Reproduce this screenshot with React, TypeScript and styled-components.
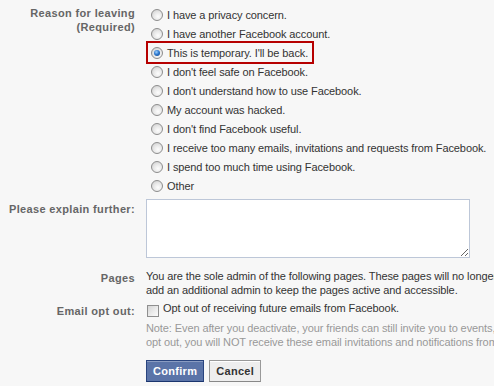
import React from "react";
import styled, { createGlobalStyle } from "styled-components";

const Global = createGlobalStyle`
  html, body { margin: 0; padding: 0; background: #f7f7f7; }
  body { overflow: hidden; width: 494px; height: 386px; }
`;

const Page = styled.div`
  font-family: "Liberation Sans", Arial, sans-serif;
  font-size: 11px;
  line-height: 14px;
  letter-spacing: -0.1px;
  color: #333;
  padding-top: 5px;
  width: 494px;
  overflow: hidden;
`;

const Row = styled.div<{ $mt?: number }>`
  display: flex;
  align-items: flex-start;
  margin-top: ${(p) => p.$mt ?? 0}px;
`;

const Label = styled.div<{ $pt?: number }>`
  flex: 0 0 135px;
  width: 135px;
  text-align: right;
  font-weight: bold;
  letter-spacing: 0.35px;
  color: #666;
  padding-top: ${(p) => p.$pt ?? 0}px;
  margin-right: 11px;
  box-sizing: border-box;
`;

const Content = styled.div`
  flex: 0 0 auto;
  white-space: nowrap;
`;

const Options = styled.div`
  display: flex;
  flex-direction: column;
`;

const Option = styled.div<{ $selected?: boolean }>`
  display: flex;
  align-items: center;
  height: 19px;
  box-sizing: border-box;
  padding-left: 5px;
  ${(p) =>
    p.$selected &&
    `
    height: 23px;
    margin: -2px 0;
    padding-left: 3px;
    padding-right: 4px;
    border: 2px solid #b60000;
    align-self: flex-start;
  `}
`;

const Radio = styled.span<{ $checked?: boolean }>`
  position: relative;
  width: 12px;
  height: 12px;
  box-sizing: border-box;
  border-radius: 50%;
  border: 1px solid #8d8d8d;
  background: radial-gradient(circle at 60% 65%, #fdfdfd 0%, #e9e9e9 45%, #c9c9c9 100%);
  margin-right: 4px;
  flex: 0 0 auto;
  ${(p) =>
    p.$checked &&
    `
    &::after {
      content: "";
      position: absolute;
      left: 2px;
      top: 2px;
      width: 6px;
      height: 6px;
      border-radius: 50%;
      background: radial-gradient(circle at 40% 35%, #9fd2ff 0%, #2f7ad0 45%, #0c3f80 100%);
    }
  `}
`;

const Textarea = styled.textarea`
  display: block;
  width: 324px;
  height: 59px;
  box-sizing: border-box;
  border: 1px solid #bdc7d8;
  background: #fff;
  margin: 0;
  padding: 3px;
  font-family: inherit;
  font-size: 11px;
  resize: both;
`;

const Checkbox = styled.span`
  display: inline-block;
  width: 12px;
  height: 12px;
  box-sizing: border-box;
  border: 1px solid #8f8f8f;
  background: linear-gradient(135deg, #d4d4d4 0%, #eeeeee 60%, #fbfbfb 100%);
  margin: 4px 4px 0 1px;
  flex: 0 0 auto;
`;

const CheckLine = styled.div`
  display: flex;
  align-items: flex-start;
`;

const Note = styled.div`
  color: #999;
  margin-top: 4px;
`;

const Buttons = styled.div`
  display: flex;
  gap: 5px;
`;

const Button = styled.button<{ $primary?: boolean }>`
  height: 22px;
  box-sizing: border-box;
  padding: 0 6px;
  font-family: "Liberation Sans", Arial, sans-serif;
  font-size: 11px;
  font-weight: bold;
  letter-spacing: 0.3px;
  cursor: pointer;
  border: 1px solid ${(p) => (p.$primary ? "#29447e" : "#999")};
  border-bottom-color: ${(p) => (p.$primary ? "#1a356e" : "#888")};
  background: ${(p) => (p.$primary ? "#5b74a8" : "#eee")};
  color: ${(p) => (p.$primary ? "#fff" : "#333")};
  box-shadow: inset 0 1px 0 ${(p) => (p.$primary ? "#8a9cc2" : "#fff")};
`;

const reasons = [
  "I have a privacy concern.",
  "I have another Facebook account.",
  "This is temporary. I'll be back.",
  "I don't feel safe on Facebook.",
  "I don't understand how to use Facebook.",
  "My account was hacked.",
  "I don't find Facebook useful.",
  "I receive too many emails, invitations and requests from Facebook.",
  "I spend too much time using Facebook.",
  "Other",
];

export default function App() {
  return (
    <>
      <Global />
      <Page>
        <Row>
          <Label $pt={1}>
            Reason for leaving
            <br />
            (Required)
          </Label>
          <Content>
            <Options>
              {reasons.map((r, i) => (
                <Option key={r} $selected={i === 2}>
                  <Radio $checked={i === 2} />
                  {r}
                </Option>
              ))}
            </Options>
          </Content>
        </Row>
        <Row $mt={4}>
          <Label $pt={3}>Please explain further:</Label>
          <Content>
            <Textarea />
          </Content>
        </Row>
        <Row $mt={11}>
          <Label $pt={2}>Pages</Label>
          <Content>
            You are the sole admin of the following pages. These pages will no longer be available. Please
            <br />
            add an additional admin to keep the pages active and accessible.
          </Content>
        </Row>
        <Row $mt={4}>
          <Label $pt={3}>Email opt out:</Label>
          <Content>
            <CheckLine>
              <Checkbox />
              Opt out of receiving future emails from Facebook.
            </CheckLine>
            <Note>
              Note: Even after you deactivate, your friends can still invite you to events, tag you in photos, or ask you to join groups. If you
              <br />
              opt out, you will NOT receive these email invitations and notifications from your friends.
            </Note>
          </Content>
        </Row>
        <Row $mt={11}>
          <Label />
          <Content>
            <Buttons>
              <Button $primary>Confirm</Button>
              <Button>Cancel</Button>
            </Buttons>
          </Content>
        </Row>
      </Page>
    </>
  );
}
